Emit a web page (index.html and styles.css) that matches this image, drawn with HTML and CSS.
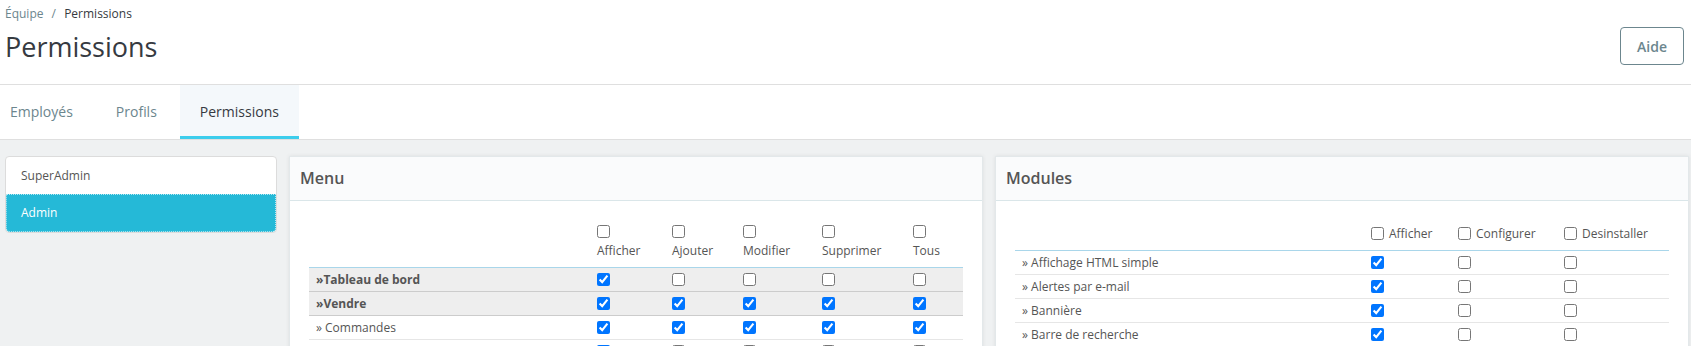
FILE: index.html
```html
<!DOCTYPE html>
<html lang="fr">
<head>
  <meta charset="UTF-8">
  <title>Permissions</title>
  <link rel="stylesheet" href="styles.css">
</head>
<body>
  <div class="page-head">
    <div class="head-left">
      <div class="breadcrumb">
        <span class="crumb">Équipe</span>
        <span class="sep">/</span>
        <span class="crumb-current">Permissions</span>
      </div>
      <h1 class="page-title">Permissions</h1>
    </div>
    <button class="btn-help">Aide</button>
  </div>

  <div class="tabs">
    <a class="tab first">Employés</a>
    <a class="tab">Profils</a>
    <a class="tab active">Permissions</a>
  </div>

  <div class="content">
    <div class="profiles">
      <div class="profile">SuperAdmin</div>
      <div class="profile selected">Admin</div>
    </div>

    <div class="card">
      <div class="card-header">Menu</div>
      <div class="card-body">
        <table class="perm-table">
          <colgroup>
            <col style="width: 281px">
            <col style="width: 75px">
            <col style="width: 71px">
            <col style="width: 79px">
            <col style="width: 91px">
            <col style="width: 57px">
          </colgroup>
          <thead>
            <tr class="stacked">
              <th></th>
              <th><input type="checkbox"><span>Afficher</span></th>
              <th><input type="checkbox"><span>Ajouter</span></th>
              <th><input type="checkbox"><span>Modifier</span></th>
              <th><input type="checkbox"><span>Supprimer</span></th>
              <th><input type="checkbox"><span>Tous</span></th>
            </tr>
          </thead>
          <tbody>
            <tr class="parent">
              <td>»Tableau de bord</td>
              <td><input type="checkbox" checked></td>
              <td><input type="checkbox"></td>
              <td><input type="checkbox"></td>
              <td><input type="checkbox"></td>
              <td><input type="checkbox"></td>
            </tr>
            <tr class="parent">
              <td>»Vendre</td>
              <td><input type="checkbox" checked></td>
              <td><input type="checkbox" checked></td>
              <td><input type="checkbox" checked></td>
              <td><input type="checkbox" checked></td>
              <td><input type="checkbox" checked></td>
            </tr>
            <tr>
              <td>» Commandes</td>
              <td><input type="checkbox" checked></td>
              <td><input type="checkbox" checked></td>
              <td><input type="checkbox" checked></td>
              <td><input type="checkbox" checked></td>
              <td><input type="checkbox" checked></td>
            </tr>
            <tr>
              <td></td>
              <td><input type="checkbox" checked></td>
              <td><input type="checkbox"></td>
              <td><input type="checkbox"></td>
              <td><input type="checkbox"></td>
              <td><input type="checkbox"></td>
            </tr>
          </tbody>
        </table>
      </div>
    </div>

    <div class="card">
      <div class="card-header">Modules</div>
      <div class="card-body">
        <table class="perm-table">
          <colgroup>
            <col style="width: 349px">
            <col style="width: 87px">
            <col style="width: 106px">
            <col style="width: 112px">
          </colgroup>
          <thead>
            <tr>
              <th></th>
              <th><input type="checkbox">Afficher</th>
              <th><input type="checkbox">Configurer</th>
              <th><input type="checkbox">Desinstaller</th>
            </tr>
          </thead>
          <tbody>
            <tr>
              <td>» Affichage HTML simple</td>
              <td><input type="checkbox" checked></td>
              <td><input type="checkbox"></td>
              <td><input type="checkbox"></td>
            </tr>
            <tr>
              <td>» Alertes par e-mail</td>
              <td><input type="checkbox" checked></td>
              <td><input type="checkbox"></td>
              <td><input type="checkbox"></td>
            </tr>
            <tr>
              <td>» Bannière</td>
              <td><input type="checkbox" checked></td>
              <td><input type="checkbox"></td>
              <td><input type="checkbox"></td>
            </tr>
            <tr>
              <td>» Barre de recherche</td>
              <td><input type="checkbox" checked></td>
              <td><input type="checkbox"></td>
              <td><input type="checkbox"></td>
            </tr>
          </tbody>
        </table>
      </div>
    </div>
  </div>
</body>
</html>
```

FILE: styles.css
```css
body {
  margin: 0;
  padding: 0;
  height: 346px;
  font-family: "Open Sans", "Noto Sans", sans-serif;
  color: #363a41;
  background: #eff1f2;
  overflow: hidden;
}

.page-head {
  display: flex;
  justify-content: space-between;
  align-items: flex-start;
  height: 84px;
  padding: 0 7px 0 5px;
  background: #fff;
  border-bottom: 1px solid #dfdfdf;
}
.breadcrumb {
  margin-top: 6px;
  font-size: 12px;
  line-height: 16px;
}
.crumb, .sep {
  color: #6c868e;
}
.sep {
  margin: 0 5px;
}
.page-title {
  margin: 8px 0 0 0;
  font-size: 27px;
  font-weight: 400;
  line-height: 34px;
}
.btn-help {
  margin-top: 27px;
  height: 38px;
  padding: 0 16px;
  border: 1px solid #6c868e;
  border-radius: 4px;
  background: #fff;
  color: #6c868e;
  font-family: "Open Sans", sans-serif;
  font-size: 14px;
  font-weight: 600;
}

.tabs {
  display: flex;
  gap: 3px;
  height: 54px;
  background: #fff;
  border-bottom: 1px solid #dfdfdf;
}
.tab {
  display: flex;
  align-items: center;
  padding: 1px 20px 0;
  font-size: 14px;
  color: #6c868e;
  border-bottom: 3px solid transparent;
}
.tab.first {
  padding-left: 10px;
}
.tab.active {
  color: #363a41;
  background: #f4f8fb;
  border-bottom-color: #3ccdec;
}

.content {
  display: grid;
  grid-template-columns: 272px 694px 694px;
  gap: 12px;
  align-items: start;
  padding: 16px 2px 0 5px;
}

.profiles {
  background: #fff;
  border: 1px solid #dcdcdc;
  border-radius: 4px;
  overflow: hidden;
}
.profile {
  height: 37px;
  line-height: 37px;
  padding-left: 15px;
  font-size: 12px;
  color: #555;
}
.profile.selected {
  height: 36px;
  line-height: 36px;
  padding-left: 14px;
  background: #25b9d7;
  color: #fff;
  border: 1px dotted #b5e8f3;
  border-radius: 0 0 4px 4px;
}

.card {
  background: #fff;
  border: 1px solid #e3e8ea;
  box-shadow: 0 0 4px rgba(0, 0, 0, 0.08);
  height: 200px;
}
.card-header {
  height: 43px;
  line-height: 43px;
  padding-left: 10px;
  background: #fafbfc;
  border-bottom: 1px solid #dae6e9;
  font-size: 16px;
  font-weight: 600;
  color: #555;
}
.card-body {
  padding: 20px 19px 0;
  height: 136px;
  overflow: hidden;
}

.perm-table {
  width: 654px;
  table-layout: fixed;
  border-collapse: collapse;
  font-size: 12px;
  color: #555;
}
.perm-table th {
  padding: 4px 7px 8px;
  text-align: left;
  font-weight: 400;
  line-height: 17px;
  white-space: nowrap;
}
.perm-table th input {
  margin: 0 5px 0 0;
  vertical-align: -2px;
}
.perm-table tr.stacked th input {
  display: block;
  margin: 0 0 4px 0;
}
.perm-table tr.stacked th span {
  display: block;
}
.perm-table thead tr {
  border-bottom: 1px solid #a9d6ea;
}
.perm-table td {
  padding: 3px 7px;
  line-height: 17px;
  border-bottom: 1px solid #e6e6e6;
}
.perm-table td input {
  margin: 0;
  vertical-align: -2px;
}
.perm-table tr.parent td {
  background: #eeeeee;
  font-weight: 700;
  border-bottom-color: #cccccc;
}
```
